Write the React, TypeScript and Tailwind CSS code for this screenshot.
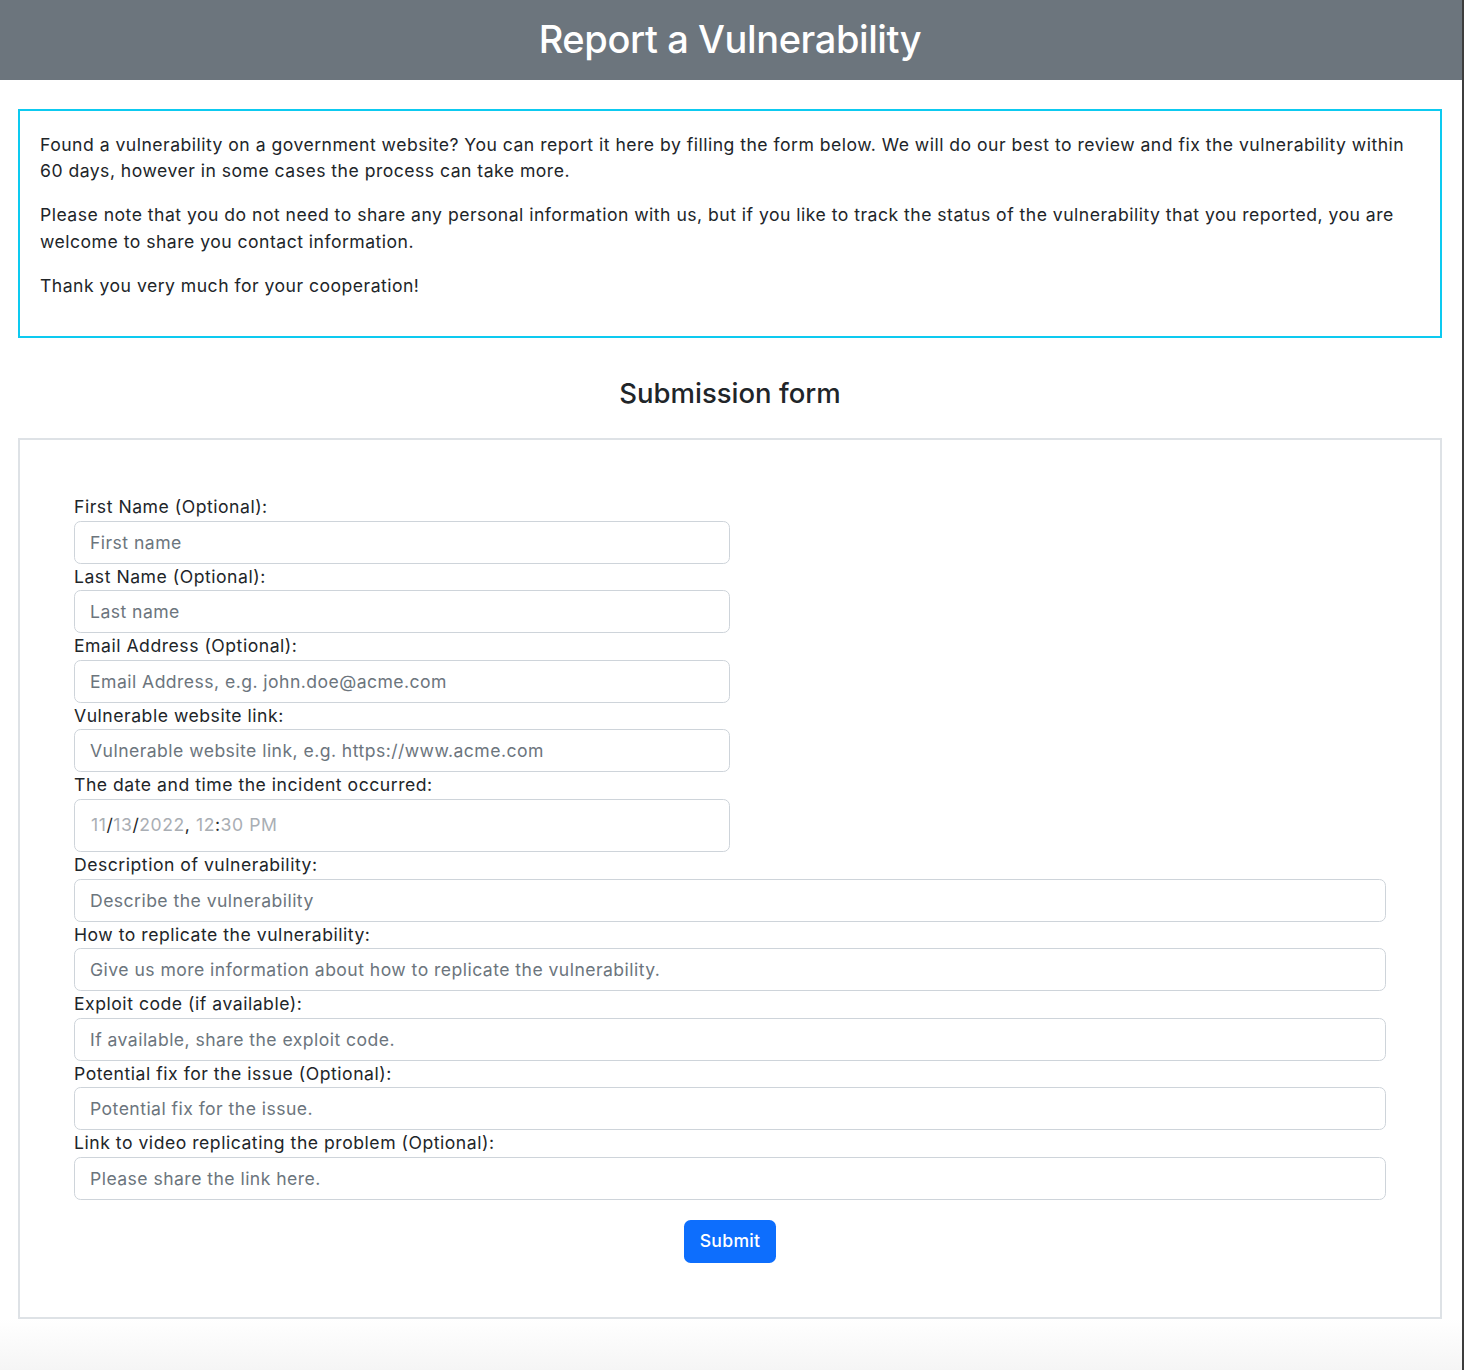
import React from "react";

const font = { fontFamily: "Inter, 'Noto Sans', 'Liberation Sans', sans-serif" };

function Field({ label, placeholder, full }: { label: string; placeholder: string; full?: boolean }) {
  return (
    <div className="flex flex-col">
      <label className="h-[26.5px] leading-[26.5px] text-[17.6px] text-[#212529] tracking-[0.52px]">{label}</label>
      <div className={full ? "w-full" : "w-[656px]"}>
        <input
          type="text"
          placeholder={placeholder}
          className="block w-full h-[43px] rounded-[6.6px] border border-[#ced4da] bg-white px-[15px] text-[17.6px] tracking-[0.45px] text-[#212529] placeholder:text-[#6c757d] outline-none"
          style={font}
        />
      </div>
    </div>
  );
}

export default function App() {
  return (
    <div className="flex w-[1464px] bg-white text-[#212529]" style={font}>
      <div className="w-[1462px] flex flex-col">
        <header className="h-[80px] bg-[#6c757d] flex items-center justify-center pr-[2px]">
          <h1 className="text-[38px] font-medium text-white leading-[46px] tracking-[-0.4px] -mt-[3px]">Report a Vulnerability</h1>
        </header>

        <div className="ml-[18px] mr-[20px] mt-[29px] border-2 border-[#0dcaf0] px-[20px] pt-[21px] pb-[19px] text-[17.6px] leading-[26.4px] tracking-[0.48px]">
          <p className="mb-[17.6px]">
            Found a vulnerability on a government website? You can report it here by filling the form below. We will do our best to review and fix the vulnerability within 60 days, however in some cases the process can take more.
          </p>
          <p className="mb-[17.6px]">
            Please note that you do not need to share any personal information with us, but if you like to track the status of the vulnerability that you reported, you are welcome to share you contact information.
          </p>
          <p className="mb-[17.6px]">Thank you very much for your cooperation!</p>
        </div>

        <h3 className="mt-[39px] text-center text-[27.5px] leading-[33.6px] font-medium pr-[2px]">Submission form</h3>

        <div className="ml-[18px] mr-[20px] mt-[28px] border-2 border-[#dee2e6] p-[54px]">
          <div className="flex flex-col">
            <Field label="First Name (Optional):" placeholder="First name" />
            <Field label="Last Name (Optional):" placeholder="Last name" />
            <Field label="Email Address (Optional):" placeholder="Email Address, e.g. john.doe@acme.com" />
            <Field label="Vulnerable website link:" placeholder="Vulnerable website link, e.g. https://www.acme.com" />
            <div className="flex flex-col">
              <label className="h-[26.5px] leading-[26.5px] text-[17.6px] tracking-[0.52px]">The date and time the incident occurred:</label>
              <div className="w-[656px] h-[53.5px] rounded-[6.6px] border border-[#ced4da] flex items-center px-[16px] text-[17.6px] tracking-[0.55px] text-[#a9aeb4]">
                <span>11</span>
                <span className="text-[#212529]">/</span>
                <span>13</span>
                <span className="text-[#212529]">/</span>
                <span>2022</span>
                <span className="text-[#212529]">,&nbsp;</span>
                <span>12</span>
                <span className="text-[#212529]">:</span>
                <span>30 PM</span>
              </div>
            </div>
            <Field full label="Description of vulnerability:" placeholder="Describe the vulnerability" />
            <Field full label="How to replicate the vulnerability:" placeholder="Give us more information about how to replicate the vulnerability." />
            <Field full label="Exploit code (if available):" placeholder="If available, share the exploit code." />
            <Field full label="Potential fix for the issue (Optional):" placeholder="Potential fix for the issue." />
            <Field full label="Link to video replicating the problem (Optional):" placeholder="Please share the link here." />
          </div>
          <div className="flex justify-center mt-[20px]">
            <button className="h-[43px] w-[92px] rounded-[6.6px] bg-[#0d6efd] text-white text-[17.6px] font-medium tracking-[0.3px]">Submit</button>
          </div>
        </div>

        <div className="h-[52px] bg-gradient-to-b from-white to-[#f5f5f5]"></div>
      </div>
      <div className="w-[2px] bg-[#3d3d3d]"></div>
    </div>
  );
}
